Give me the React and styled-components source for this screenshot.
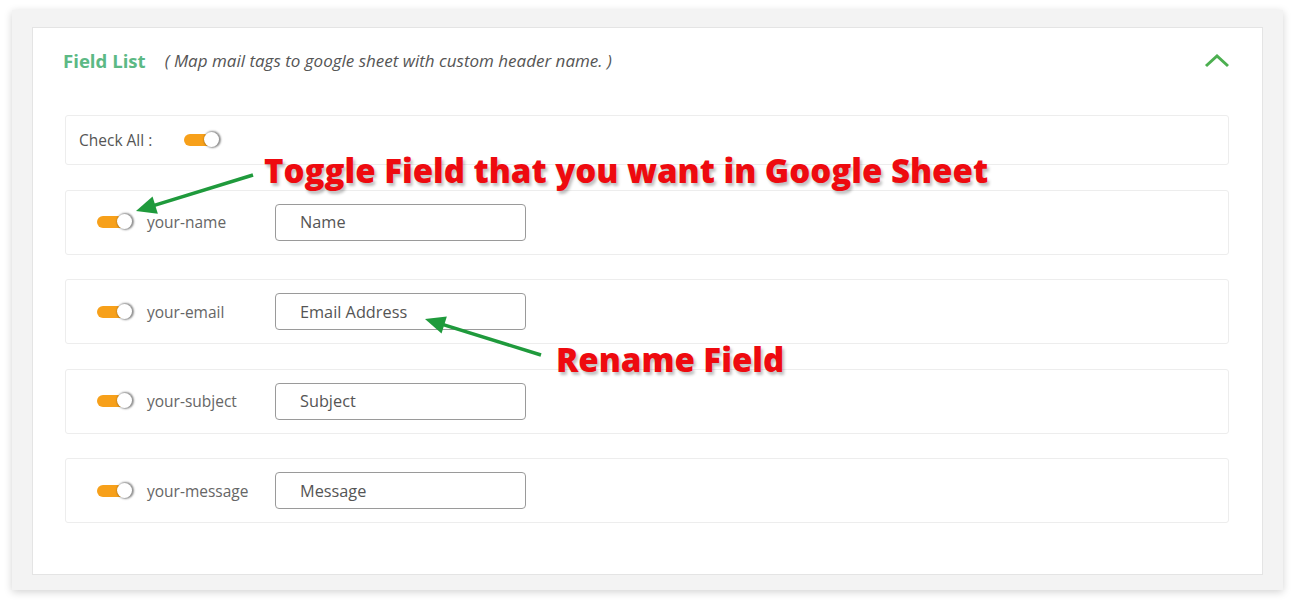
import React from 'react';
import styled, { createGlobalStyle } from 'styled-components';

const GlobalStyle = createGlobalStyle`
  body {
    margin: 0;
    background: #ffffff;
    font-family: "Open Sans", "Noto Sans", sans-serif;
  }
`;

const Page = styled.div`
  position: relative;
  width: 1295px;
  height: 604px;
  padding: 10px 12px 0 12px;
  box-sizing: border-box;
`;

const Frame = styled.div`
  height: 580px;
  background: #f3f3f3;
  box-shadow: 0 2px 8px rgba(0, 0, 0, 0.18);
  padding: 17px 20px 15px 20px;
  box-sizing: border-box;
`;

const Panel = styled.div`
  height: 100%;
  background: #fff;
  border: 1px solid #e4e4e4;
  box-sizing: border-box;
  padding: 0 33px 0 32px;
`;

const Header = styled.div`
  height: 65px;
  display: flex;
  align-items: center;
  padding-left: 30px;
  margin-left: -32px;
  margin-right: -33px;
  padding-right: 30px;
  margin-bottom: 22px;
`;

const Title = styled.span`
  color: #5cb985;
  font-weight: 700;
  font-size: 18.6px;
`;

const Subtitle = styled.span`
  color: #555;
  font-style: italic;
  font-size: 17px;
  margin-left: 19px;
  flex: 1;
`;

const Chevron = styled.svg`
  width: 26px;
  height: 14px;
  margin-right: 2px;
`;

const Rows = styled.div`
  display: flex;
  flex-direction: column;
  gap: 24.6px;
`;

const Row = styled.div`
  display: flex;
  align-items: center;
  height: ${(p) => (p.$compact ? '50px' : '65px')};
  border: 1px solid #ededed;
  border-radius: 3px;
  box-sizing: border-box;
  padding-left: ${(p) => (p.$compact ? '13px' : '31px')};
`;

const CheckLabel = styled.span`
  color: #555;
  font-size: 15.5px;
  width: 105px;
`;

const Toggle = styled.span`
  position: relative;
  display: inline-block;
  width: 37px;
  height: 16px;

  &::before {
    content: '';
    position: absolute;
    left: 0;
    top: 2px;
    width: 32px;
    height: 12px;
    border-radius: 6px;
    background: #f7a01a;
  }

  &::after {
    content: '';
    position: absolute;
    right: 2px;
    top: 0;
    width: 15px;
    height: 15px;
    border-radius: 50%;
    background: #fff;
    box-shadow: 1px 0 2px 1px rgba(0, 0, 0, 0.45);
  }
`;

const FieldKey = styled.span`
  color: #666;
  font-size: 15.5px;
  margin-left: 13px;
  width: 128px;
`;

const NameInput = styled.input`
  width: 251px;
  height: 37px;
  box-sizing: border-box;
  border: 1px solid #9a9a9a;
  border-radius: 4px;
  padding: 0 0 0 24px;
  font-family: "Open Sans", "Noto Sans", sans-serif;
  font-size: 16.3px;
  color: #555;
  background: #fff;
  outline: none;
`;

const Note = styled.div`
  position: absolute;
  left: ${(p) => p.$x}px;
  top: ${(p) => p.$y}px;
  color: #ee0a0f;
  font-family: "Open Sans", sans-serif;
  font-weight: 800;
  font-size: 33px;
  white-space: nowrap;
  text-shadow: 2px 3px 3px rgba(0, 0, 0, 0.25);
`;

const Arrows = styled.svg`
  position: absolute;
  left: 0;
  top: 0;
  width: 1295px;
  height: 604px;
  pointer-events: none;
`;

const fields = [
  { key: 'your-name', value: 'Name' },
  { key: 'your-email', value: 'Email Address' },
  { key: 'your-subject', value: 'Subject' },
  { key: 'your-message', value: 'Message' },
];

function Arrow({ x1, y1, x2, y2 }) {
  const a = Math.atan2(y2 - y1, x2 - x1);
  const len = 22;
  const spread = 0.42;
  const p1 = [x2 - len * Math.cos(a - spread), y2 - len * Math.sin(a - spread)];
  const p2 = [x2 - len * Math.cos(a + spread), y2 - len * Math.sin(a + spread)];
  const sx = x2 - 14 * Math.cos(a);
  const sy = y2 - 14 * Math.sin(a);
  return (
    <g>
      <line x1={x1} y1={y1} x2={sx} y2={sy} stroke="#1f9a3c" strokeWidth="3.5" />
      <polygon points={`${x2},${y2} ${p1[0]},${p1[1]} ${p2[0]},${p2[1]}`} fill="#1f9a3c" />
    </g>
  );
}

export default function App() {
  return (
    <Page>
      <GlobalStyle />
      <Frame>
        <Panel>
          <Header>
            <Title>Field List</Title>
            <Subtitle>( Map mail tags to google sheet with custom header name. )</Subtitle>
            <Chevron viewBox="0 0 26 14">
              <polyline points="2,12 13,2 24,12" fill="none" stroke="#4caf50" strokeWidth="3" />
            </Chevron>
          </Header>
          <Rows>
            <Row $compact>
              <CheckLabel>Check All :</CheckLabel>
              <Toggle />
            </Row>
            {fields.map((f) => (
              <Row key={f.key}>
                <Toggle />
                <FieldKey>{f.key}</FieldKey>
                <NameInput defaultValue={f.value} />
              </Row>
            ))}
          </Rows>
        </Panel>
      </Frame>
      <Note $x={264} $y={148}>Toggle Field that you want in Google Sheet</Note>
      <Note $x={556} $y={337}>Rename Field</Note>
      <Arrows viewBox="0 0 1295 604">
        <Arrow x1={253} y1={175} x2={136} y2={211} />
        <Arrow x1={541} y1={355} x2={425} y2={319} />
      </Arrows>
    </Page>
  );
}
